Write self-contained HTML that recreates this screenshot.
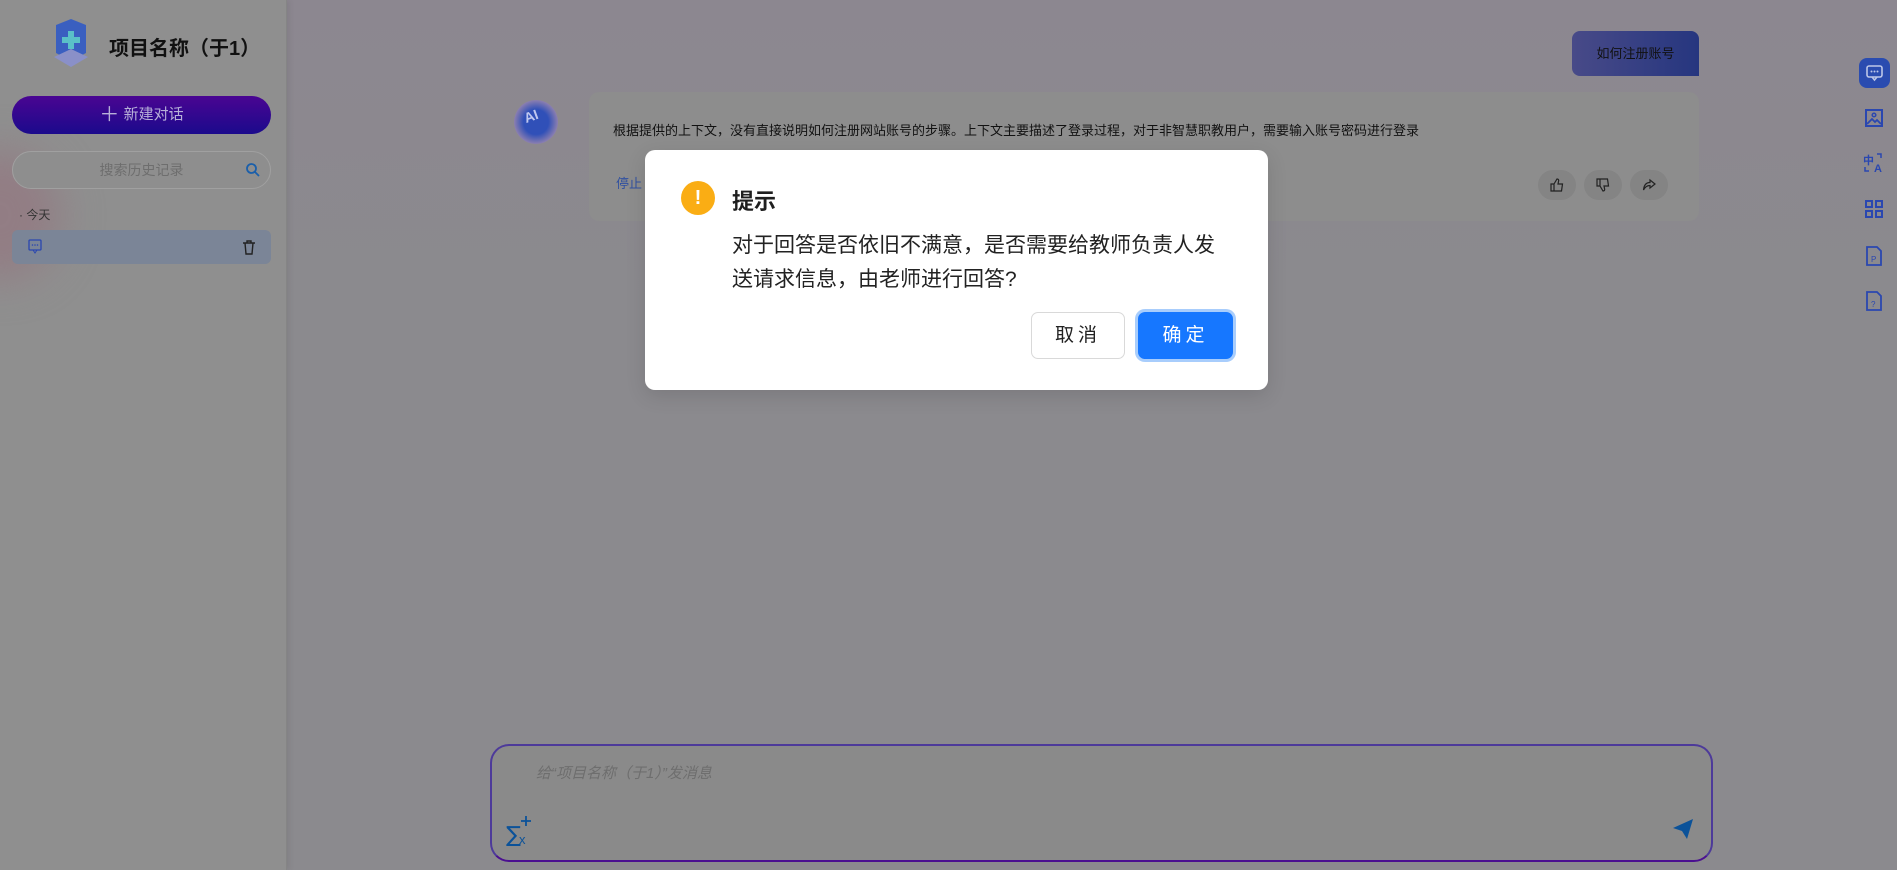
<!DOCTYPE html>
<html><head><meta charset="utf-8"><style>
*{margin:0;padding:0;box-sizing:border-box}
body{width:1897px;height:870px;overflow:hidden;font-family:"Liberation Sans","Noto Sans CJK SC",sans-serif;background:#8b8a8e;position:relative}
.abs{position:absolute}
#side{left:0;top:0;width:287px;height:870px;background:#8f8f8f;border-right:1px solid #858585;box-shadow:2px 0 6px rgba(0,0,0,.08)}
</style></head><body>
<div class="abs" style="left:287px;top:0;width:1610px;height:300px;background:linear-gradient(180deg,#8c8790,#8b8a8e)"></div>
<div id="side" class="abs">
  <div class="abs" style="left:-60px;top:150px;width:120px;height:130px;border-radius:50%;background:#927d84;filter:blur(20px)"></div>
  <svg class="abs" style="left:48px;top:17px" width="46" height="54" viewBox="0 0 46 54">
    <path d="M8 8 L23 2 L38 8 L38 36 L23 44 L8 36Z" fill="#3a5fc0"/>
    <path d="M20 14h6v6h6v6h-6v6h-6v-6h-6v-6h6z" fill="#5ac0c8"/>
    <path d="M6 40 L23 50 L40 40 L23 32Z" fill="#8a90c8"/>
  </svg>
  <div class="abs" style="left:109px;top:32px;font-size:20px;font-weight:bold;color:#111">项目名称（于1）</div>
  <div class="abs" style="left:12px;top:96px;width:259px;height:38px;border-radius:19px;background:linear-gradient(180deg,#4a0592,#1b0a8c);color:#b8b0d8;font-size:15px;text-align:center;line-height:38px"><span style="font-size:20px;vertical-align:-2px">＋</span> 新建对话</div>
  <div class="abs" style="left:12px;top:151px;width:259px;height:38px;border-radius:19px;border:1px solid #a0a0a0;background:#8e8e8e;color:#6e6e6e;font-size:14px;text-align:center;line-height:36px">搜索历史记录</div>
  <svg class="abs" style="left:245px;top:162px" width="16" height="16"><circle cx="6.5" cy="6.5" r="4.5" stroke="#1b5faa" stroke-width="1.8" fill="none"/><path d="M10 10l4 4" stroke="#1b5faa" stroke-width="1.8"/></svg>
  <div class="abs" style="left:19px;top:206px;font-size:12px;color:#333">· 今天</div>
  <div class="abs" style="left:12px;top:230px;width:259px;height:34px;border-radius:6px;background:#7b8597"></div>
  <svg class="abs" style="left:28px;top:239px" width="14" height="15"><rect x="1" y="1" width="12" height="10" rx="1" stroke="#2a47b0" fill="none" stroke-width="1.3"/><path d="M5 11l2 3 2-3" stroke="#2a47b0" fill="none"/><circle cx="4.5" cy="6" r=".8" fill="#2a47b0"/><circle cx="7" cy="6" r=".8" fill="#2a47b0"/><circle cx="9.5" cy="6" r=".8" fill="#2a47b0"/></svg>
  <svg class="abs" style="left:242px;top:240px" width="14" height="15"><path d="M1 3h12M5 3V1h4v2M3 3l1 11h6l1-11" stroke="#222" stroke-width="1.4" fill="none"/></svg>
</div>
<div class="abs" style="left:1572px;top:31px;width:127px;height:45px;border-radius:8px 8px 0 8px;background:linear-gradient(90deg,#484a88,#26367f);color:#111;font-size:13px;text-align:center;line-height:45px">如何注册账号</div>
<div class="abs" style="left:514px;top:100px;width:44px;height:44px;border-radius:50%;background:radial-gradient(circle,#3050b8 40%,#8a7eb0 70%,transparent 75%)"></div>
<div class="abs" style="left:524px;top:108px;color:#c0c8f0;font-size:14px;font-weight:bold;transform:rotate(-20deg)">AI</div>
<div class="abs" style="left:589px;top:92px;width:1110px;height:129px;border-radius:10px;background:#8d8d8d"></div>
<div class="abs" style="left:613px;top:120px;font-size:13px;color:#111">根据提供的上下文，没有直接说明如何注册网站账号的步骤。上下文主要描述了登录过程，对于非智慧职教用户，需要输入账号密码进行登录</div>
<div class="abs" style="left:616px;top:173px;font-size:13px;color:#3050a0">停止</div>
<div class="abs" style="left:1538px;top:170px;width:38px;height:30px;border-radius:15px;background:#848484"></div>
<div class="abs" style="left:1584px;top:170px;width:38px;height:30px;border-radius:15px;background:#848484"></div>
<div class="abs" style="left:1630px;top:170px;width:38px;height:30px;border-radius:15px;background:#848484"></div>
<svg class="abs" style="left:1550px;top:178px" width="14" height="14"><path d="M1 6h3v7H1zM4 6l3-5c1.5 0 2 1 1.5 2.5L8 6h4.5l-1 7H4" stroke="#222" stroke-width="1.2" fill="none"/></svg>
<svg class="abs" style="left:1596px;top:178px" width="14" height="14"><path d="M1 8h3V1H1zM4 8l3 5c1.5 0 2-1 1.5-2.5L8 8h4.5l-1-7H4" stroke="#222" stroke-width="1.2" fill="none"/></svg>
<svg class="abs" style="left:1642px;top:178px" width="14" height="14"><path d="M8 2l5 4-5 4V7.5C5 7.5 3 9 1.5 12 2 7 4.5 4.5 8 4.5z" stroke="#222" stroke-width="1.2" fill="none"/></svg>
<div class="abs" style="left:1859px;top:58px;width:31px;height:30px;border-radius:8px;background:#2a4cb0"></div>
<svg class="abs" style="left:1865px;top:64px" width="19" height="19"><rect x="2" y="2" width="15" height="11" rx="2" stroke="#bcc6e8" stroke-width="1.6" fill="none"/><path d="M7 13l2.5 3 2.5-3" stroke="#bcc6e8" stroke-width="1.6" fill="none"/><circle cx="6.5" cy="7.5" r="1" fill="#bcc6e8"/><circle cx="9.5" cy="7.5" r="1" fill="#bcc6e8"/><circle cx="12.5" cy="7.5" r="1" fill="#bcc6e8"/></svg>
<svg class="abs" style="left:1864px;top:108px" width="20" height="20"><rect x="2" y="2" width="16" height="16" stroke="#2a47b0" stroke-width="2" fill="none"/><path d="M3 16l5-5 3 3 2-2 4 4" stroke="#2a47b0" stroke-width="1.8" fill="none"/><circle cx="10" cy="7" r="1.8" stroke="#2a47b0" fill="none" stroke-width="1.5"/></svg>
<svg class="abs" style="left:1863px;top:152px" width="22" height="22"><text x="0" y="12" font-size="11" font-weight="bold" fill="#2a47b0" font-family="Noto Sans CJK SC">中</text><text x="11" y="20" font-size="11" font-weight="bold" fill="#2a47b0" font-family="Liberation Sans">A</text><path d="M14 2h4v4M2 15v4h4" stroke="#2a47b0" stroke-width="1.5" fill="none"/></svg>
<svg class="abs" style="left:1864px;top:199px" width="20" height="20"><g stroke="#2a47b0" stroke-width="2" fill="none"><rect x="2" y="2" width="6" height="6"/><rect x="12" y="2" width="6" height="6"/><rect x="2" y="12" width="6" height="6"/><rect x="12" y="12" width="6" height="6"/></g></svg>
<svg class="abs" style="left:1865px;top:245px" width="18" height="22"><path d="M2 2h10l4 4v14H2z" stroke="#2a47b0" stroke-width="1.8" fill="none"/><text x="6" y="17" font-size="8" fill="#2a47b0" font-family="Liberation Sans">P</text></svg>
<svg class="abs" style="left:1865px;top:290px" width="18" height="22"><path d="M2 2h10l4 4v14H2z" stroke="#2a47b0" stroke-width="1.8" fill="none"/><text x="6" y="17" font-size="8" fill="#2a47b0" font-family="Liberation Sans">?</text></svg>
<div class="abs" style="left:490px;top:744px;width:1223px;height:118px;border-radius:19px;border:2px solid #4d3a9a;border-bottom-color:#4a0f90;background:#8a8a8a"></div>
<div class="abs" style="left:536px;top:762px;font-size:15px;color:#6e6e6e;font-style:italic">给“项目名称（于1）”发消息</div>
<svg class="abs" style="left:506px;top:814px" width="30" height="32"><text x="0" y="28" font-size="22" fill="#0b5299" font-family="DejaVu Sans">∑</text><text x="13" y="30" font-size="13" fill="#0b5299" font-family="Liberation Sans">x</text><path d="M20 2v10M15 7h10" stroke="#0b5299" stroke-width="1.8"/></svg>
<svg class="abs" style="left:1671px;top:817px" width="24" height="24"><path d="M2 11L22 2 16 22 11 14z" fill="#0b5299"/></svg>
<div class="abs" style="left:645px;top:150px;width:623px;height:240px;border-radius:10px;background:#fff;box-shadow:0 6px 20px rgba(0,0,0,.12)">
  <div class="abs" style="left:36px;top:31px;width:34px;height:34px;border-radius:50%;background:#faad14;color:#fff;font-size:20px;font-weight:bold;text-align:center;line-height:34px">!</div>
  <div class="abs" style="left:87px;top:34px;font-size:22px;font-weight:bold;color:#1f1f1f">提示</div>
  <div class="abs" style="left:87px;top:79px;width:530px;font-size:21px;line-height:34px;color:#222;white-space:nowrap">对于回答是否依旧不满意，是否需要给教师负责人发<br>送请求信息，由老师进行回答?</div>
  <div class="abs" style="left:386px;top:162px;width:94px;height:47px;border:1px solid #d9d9d9;border-radius:7px;font-size:19px;text-align:center;line-height:45px;color:#222;letter-spacing:4px">取消</div>
  <div class="abs" style="left:493px;top:162px;width:95px;height:47px;border-radius:7px;background:#1677ff;box-shadow:0 0 0 3px #a8cdfc;font-size:19px;text-align:center;line-height:47px;color:#fff;letter-spacing:4px">确定</div>
</div>
</body></html>
